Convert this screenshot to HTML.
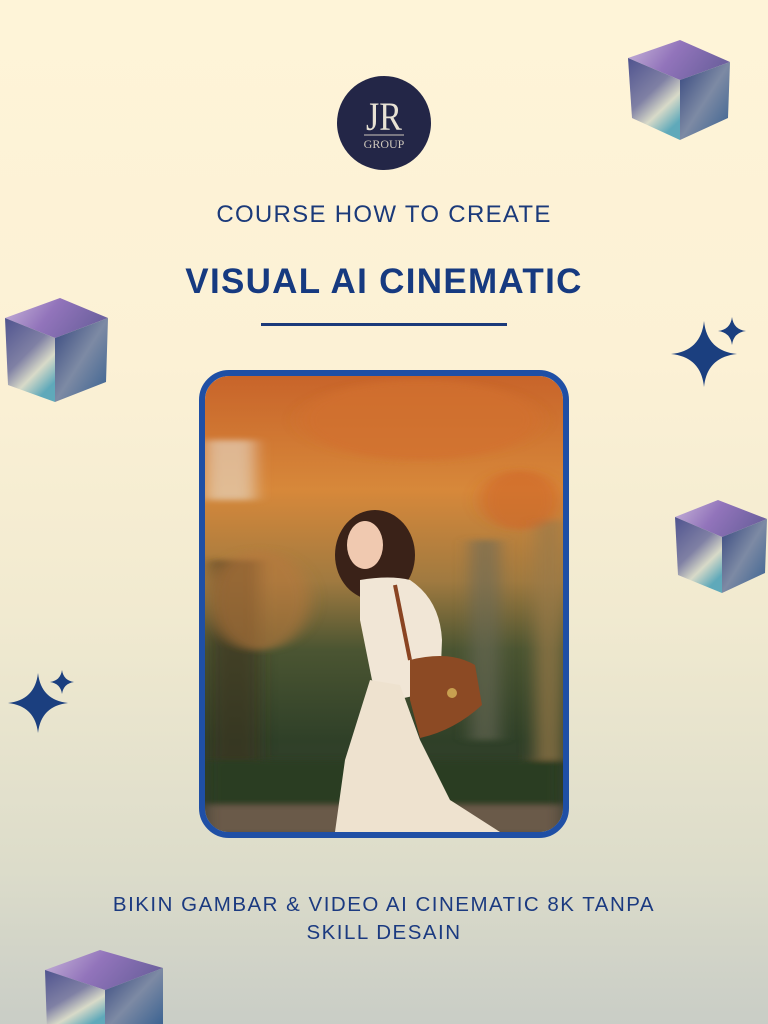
<!DOCTYPE html>
<html><head><meta charset="utf-8"><style>
html,body{margin:0;padding:0}
body{width:768px;height:1024px;position:relative;overflow:hidden;background:linear-gradient(180deg,#fef4d8 0%,#fcf1d5 35%,#f1ead0 60%,#dcdcca 85%,#c9cdc6 100%);font-family:"Liberation Sans",sans-serif}
.t{position:absolute;left:0;width:768px;text-align:center;color:#1b3a7a}
</style></head><body>
<svg width="768" height="1024" style="position:absolute;left:0;top:0">
<defs>
<linearGradient id="top" x1="0" y1="0" x2="1" y2="0.3"><stop offset="0" stop-color="#c9b6da"/><stop offset="0.5" stop-color="#9274bb"/><stop offset="1" stop-color="#6f62a0"/></linearGradient>
<linearGradient id="lf" x1="0" y1="0" x2="0.6" y2="1"><stop offset="0" stop-color="#4f538f"/><stop offset="0.5" stop-color="#7f80a4"/><stop offset="0.75" stop-color="#d8dac8"/><stop offset="1" stop-color="#5fa9ba"/></linearGradient>
<linearGradient id="rf" x1="0" y1="0" x2="1" y2="1"><stop offset="0" stop-color="#34457e"/><stop offset="0.5" stop-color="#7d8aa4"/><stop offset="1" stop-color="#355f90"/></linearGradient>
</defs>
<g>
<polygon points="628,58 680,40 730,62 680,80" fill="url(#top)"/>
<polygon points="628,58 680,80 680,140 632,118" fill="url(#lf)"/>
<polygon points="680,80 730,62 728,118 680,140" fill="url(#rf)"/>
</g>
<g>
<polygon points="5,318 60,298 108,318 55,338" fill="url(#top)"/>
<polygon points="5,318 55,338 55,402 8,385" fill="url(#lf)"/>
<polygon points="55,338 108,318 106,382 55,402" fill="url(#rf)"/>
</g>
<g>
<polygon points="675,517 718,500 767,519 722,537" fill="url(#top)"/>
<polygon points="675,517 722,537 722,593 678,575" fill="url(#lf)"/>
<polygon points="722,537 767,519 765,573 722,593" fill="url(#rf)"/>
</g>
<g>
<polygon points="45,970 100,950 163,968 105,990" fill="url(#top)"/>
<polygon points="45,970 105,990 105,1030 47,1030" fill="url(#lf)"/>
<polygon points="105,990 163,968 163,1030 105,1030" fill="url(#rf)"/>
</g>
<g fill="#1b3f7f">
<path d="M38,673 Q41,700 68,703 Q41,706 38,733 Q35,706 8,703 Q35,700 38,673Z"/>
<path d="M62,670 Q63.5,680.5 74,682 Q63.5,683.5 62,694 Q60.5,683.5 50,682 Q60.5,680.5 62,670Z"/>
<path d="M704,321 Q707,351 737,354 Q707,357 704,387 Q701,357 671,354 Q701,351 704,321Z"/>
<path d="M732,317 Q733.5,329.5 746,331 Q733.5,332.5 732,345 Q730.5,332.5 718,331 Q730.5,329.5 732,317Z"/>
</g>
<circle cx="384" cy="123" r="47" fill="#232647"/>
<text x="384" y="130" text-anchor="middle" font-family="Liberation Serif" font-size="40" fill="#e8e2d4" transform="translate(384 0) scale(0.85 1) translate(-384 0)">JR</text>
<line x1="364" y1="135" x2="404" y2="135" stroke="#cfc8bc" stroke-width="1"/>
<text x="384" y="148" text-anchor="middle" font-family="Liberation Serif" font-size="12" fill="#cfc8bc">GROUP</text>
<rect x="261" y="323" width="246" height="3" fill="#1b3a7a"/>
<defs>
<clipPath id="ph"><rect x="205" y="376" width="358" height="456" rx="24"/></clipPath>
<linearGradient id="bg" x1="0" y1="0" x2="0" y2="1"><stop offset="0" stop-color="#c8642a"/><stop offset="0.25" stop-color="#d7883a"/><stop offset="0.45" stop-color="#a07a40"/><stop offset="0.6" stop-color="#4b5532"/><stop offset="0.8" stop-color="#2f4028"/><stop offset="1" stop-color="#3a3c32"/></linearGradient>
<filter id="bl"><feGaussianBlur stdDeviation="8 3"/></filter>
</defs>
<g clip-path="url(#ph)">
<rect x="205" y="376" width="358" height="456" fill="url(#bg)"/>
<g filter="url(#bl)">
<rect x="205" y="440" width="50" height="60" fill="#e8e0d0" opacity="0.6"/>
<rect x="210" y="560" width="50" height="200" fill="#3a3022" opacity="0.6"/>
<rect x="470" y="540" width="30" height="200" fill="#6a6a58" opacity="0.6"/>
<rect x="535" y="520" width="28" height="240" fill="#9a7a48" opacity="0.7"/>
<rect x="205" y="760" width="358" height="50" fill="#2a3d22"/>
<rect x="205" y="805" width="358" height="30" fill="#6a5a48"/>
<ellipse cx="420" cy="420" rx="120" ry="40" fill="#d2702c" opacity="0.7"/>
<ellipse cx="260" cy="600" rx="50" ry="50" fill="#b8783a" opacity="0.6"/>
<ellipse cx="520" cy="500" rx="40" ry="30" fill="#d0652a" opacity="0.6"/>
</g>
<ellipse cx="375" cy="555" rx="40" ry="45" fill="#3a2218"/>
<ellipse cx="365" cy="545" rx="18" ry="24" fill="#f0c9b0"/>
<path d="M360,580 Q390,575 410,580 Q440,600 442,640 L440,690 L395,700 L372,680 L360,620Z" fill="#f1e6d6"/>
<path d="M370,680 L400,685 L420,740 L450,800 L500,832 L335,832 L345,760Z" fill="#eee2cf"/>
<path d="M395,585 L410,660" stroke="#8a4422" stroke-width="4"/>
<path d="M410,660 Q450,650 475,665 L482,705 Q455,730 420,738 L410,700Z" fill="#8c4a24"/>
<circle cx="452" cy="693" r="5" fill="#c8a050"/>
</g>
<rect x="202" y="373" width="364" height="462" rx="27" fill="none" stroke="#1f4fa5" stroke-width="6"/>
</svg>
<div class="t" style="top:201px;font-size:24px;letter-spacing:1.3px">COURSE HOW TO CREATE</div>
<div class="t" style="top:262px;font-size:35px;font-weight:bold;color:#163a80;letter-spacing:1.3px">VISUAL AI CINEMATIC</div>
<div class="t" style="top:891px;font-size:20.5px;line-height:28px;color:#1b3a80;letter-spacing:1.5px">BIKIN GAMBAR &amp; VIDEO AI CINEMATIC 8K TANPA<br>SKILL DESAIN</div>
</body></html>
